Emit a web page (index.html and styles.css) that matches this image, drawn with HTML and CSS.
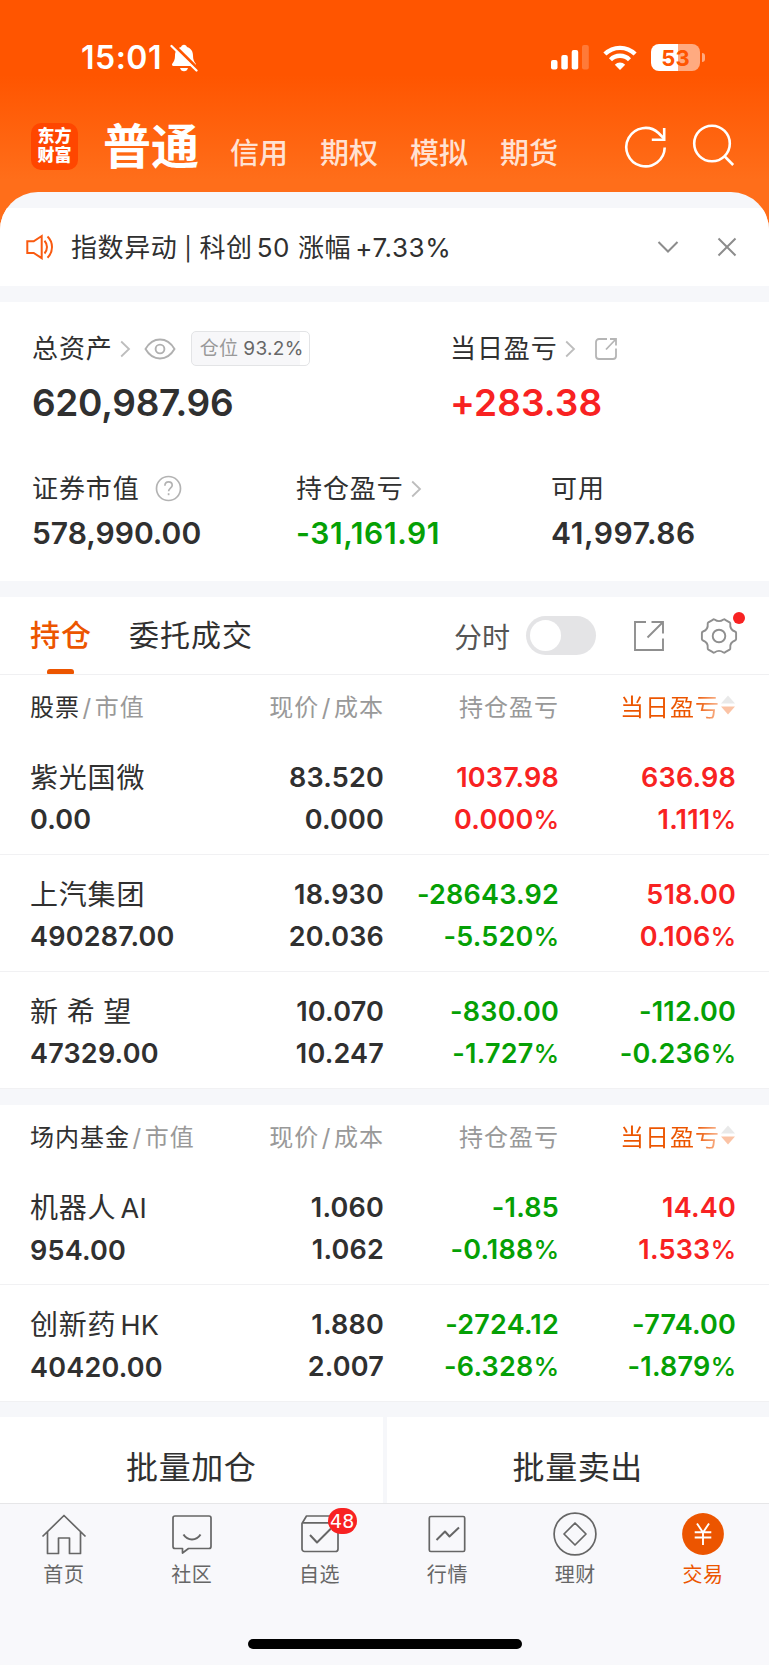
FILE: index.html
```html
<!DOCTYPE html>
<html lang="zh-CN">
<head>
<meta charset="utf-8">
<title>交易</title>
<link rel="stylesheet" href="styles.css">
</head>
<body>
<div class="page">
  <header class="top">
    <div class="status">
      <span class="time">15:01</span>
      <svg class="bell" width="28" height="28" viewBox="0 0 28 28"><path d="M14 0.8c-1.6 0-2.6 1-2.9 2.2C6.900 4.200 5 7.500 5 11.500c0 4-1 6-2.600 8-.8 1-.4 2.400 1 2.400h21.200c1.400 0 1.800-1.400 1-2.400-1.600-2-2.600-4-2.600-8 0-4-1.900-7.300-6.100-8.500C16.600 1.800 15.600.8 14 .8z" fill="#fff"/><path d="M10 24h8c-.5 2-2 3.300-4 3.300S10.500 26 10 24z" fill="#fff"/><path d="M2.500-.2 29 26" stroke="#ff5500" stroke-width="3.200"/><path d="M1.500 2 26.500 26.500" stroke="#fff" stroke-width="2.300" stroke-linecap="round"/></svg>
      <div class="indicators">
        <svg class="signal" width="39" height="25" viewBox="0 0 39 25" fill="#fff"><rect x="0" y="15" width="6.500" height="9.500" rx="2"/><rect x="10.300" y="10" width="6.500" height="14.500" rx="2"/><rect x="20.700" y="5" width="6.500" height="19.500" rx="2"/><rect x="31" y="0" width="6.800" height="24.500" rx="2" opacity=".22"/></svg>
        <svg class="wifi" width="34" height="26" viewBox="0 0 34 26" fill="none" stroke="#fff" stroke-width="4.300"><path d="M1.900 9.100a21.300 21.300 0 0 1 30.200 0"/><path d="M7.500 14.700a13.400 13.400 0 0 1 19 0"/><path d="M17 25l-5.200-5.200a7.300 7.300 0 0 1 10.400 0z" fill="#fff" stroke="none"/></svg>
        <div class="battery"><span class="battery-level">53</span></div>
      </div>
    </div>
    <nav class="accounts">
      <div class="logo"><span>东方</span><span>财富</span></div>
      <span class="account current">普通</span>
      <span class="account">信用</span>
      <span class="account">期权</span>
      <span class="account">模拟</span>
      <span class="account">期货</span>
      <svg class="refresh" width="44" height="44" viewBox="0 0 44 44" fill="none" stroke="#fff" stroke-width="2.600"><path d="M40.700 22.500A19.200 19.200 0 1 1 34.500 8L40 13.500"/><path d="M40.200 3v11.700H27.800"/></svg>
      <svg class="search" width="44" height="44" viewBox="0 0 44 44" fill="none" stroke="#fff" stroke-width="2.600"><circle cx="20" cy="19.500" r="17.800"/><path d="M32.300 32 41.200 41"/></svg>
    </nav>
  </header>

  <main class="sheet">
    <section class="notice">
      <svg class="speaker" width="28" height="26" viewBox="0 0 28 26" fill="none" stroke="#f95a10" stroke-width="2"><path d="M1.300 7.300h6.400l8-5.300v22.200l-8-5.300H1.300z"/><path d="M18.500 6.700c3.300 3.600 3.300 9.200 0 12.800M21.500 2.500c6 5.800 6 15.400 0 21.200"/></svg>
      <span class="notice-text">指数异动 <span class="bar">|</span> 科创<span class="gap"></span>50 涨幅<span class="gap"></span>+7.33%</span>
      <svg class="fold" width="22" height="14" viewBox="0 0 22 14" fill="none" stroke="#8c8c8c" stroke-width="2"><path d="M1.500 2 11 11.500 20.500 2"/></svg>
      <svg class="close" width="20" height="20" viewBox="0 0 20 20" fill="none" stroke="#8c8c8c" stroke-width="2"><path d="M1.500 1.500l17 17M18.500 1.500l-17 17"/></svg>
    </section>

    <section class="assets">
      <div class="main-figures">
        <div class="figure">
          <div class="label">总资产
            <svg class="arrow" width="11" height="18" viewBox="0 0 11 18" fill="none" stroke="#bdbdbd" stroke-width="1.800"><path d="M1.200 1.500 9 9l-7.800 7.500"/></svg>
            <svg class="eye" width="32" height="22" viewBox="0 0 32 22" fill="none" stroke="#b0b0b0" stroke-width="1.900"><path d="M1.500 11C5 5 10 1.500 16 1.500S27 5 30.500 11C27 17 22 20.500 16 20.500S5 17 1.500 11z"/><circle cx="16" cy="11" r="4.400"/></svg>
            <span class="ratio"><span class="ratio-name">仓位</span>93.2%</span>
          </div>
          <div class="big">620,987.96</div>
        </div>
        <div class="figure">
          <div class="label">当日盈亏
            <svg class="arrow" width="11" height="18" viewBox="0 0 11 18" fill="none" stroke="#bdbdbd" stroke-width="1.800"><path d="M1.200 1.500 9 9l-7.800 7.500"/></svg>
            <svg class="share-small" width="24" height="24" viewBox="0 0 24 24" fill="none" stroke="#b5b5b5" stroke-width="1.800"><path d="M13 2H5a3 3 0 0 0-3 3v14a3 3 0 0 0 3 3h14a3 3 0 0 0 3-3v-7.500M16 2h6v6.500M22 2 12 12.500"/></svg>
          </div>
          <div class="big up">+283.38</div>
        </div>
      </div>
      <div class="sub-figures">
        <div class="figure">
          <div class="label">证券市值
            <svg class="help" width="27" height="27" viewBox="0 0 27 27" fill="none" stroke="#b3b3b3" stroke-width="1.700"><circle cx="13.500" cy="13.500" r="12"/><path d="M9.900 10.800c0-2.400 1.500-3.900 3.700-3.900s3.600 1.500 3.600 3.400c0 2.700-3.600 3.100-3.600 6"/><path d="M13.600 18.200v2"/></svg>
          </div>
          <div class="mid">578,990.00</div>
        </div>
        <div class="figure">
          <div class="label">持仓盈亏
            <svg class="arrow" width="11" height="18" viewBox="0 0 11 18" fill="none" stroke="#bdbdbd" stroke-width="1.800"><path d="M1.200 1.500 9 9l-7.800 7.500"/></svg>
          </div>
          <div class="mid loose down">-31,161.91</div>
        </div>
        <div class="figure">
          <div class="label">可用</div>
          <div class="mid loose">41,997.86</div>
        </div>
      </div>
    </section>

    <section class="holdings">
      <div class="tabs">
        <span class="tab active">持仓</span>
        <span class="tab">委托成交</span>
        <span class="switch-name">分时</span>
        <span class="switch"></span>
        <svg class="share" width="32" height="32" viewBox="0 0 32 32" fill="none" stroke="#8f8f8f" stroke-width="1.900"><path d="M13 2H2v28h28V18.500M18.500 2H30v11.500M30 2 14.500 17.500"/></svg>
        <span class="settings">
          <svg width="38" height="38" viewBox="0 0 38 38" fill="none" stroke="#8f8f8f" stroke-width="1.900" stroke-linejoin="round"><path d="M12.800 2.800 Q13.500 2 14.500 2.500 Q19 5.800 23.500 2.500 Q24.500 2 25.200 2.800 L29.600 5.300 Q30.500 6 30.300 7 Q29.600 12.500 35 14.500 Q36 14.800 36.100 15.800 V22.200 Q36 23.200 35 23.500 Q29.600 25.500 30.300 31 Q30.500 32 29.600 32.700 L25.200 35.200 Q24.500 36 23.500 35.500 Q19 32.200 14.500 35.500 Q13.500 36 12.800 35.200 L8.400 32.700 Q7.500 32 7.700 31 Q8.400 25.500 3 23.500 Q2 23.200 1.900 22.200 V15.800 Q2 14.800 3 14.500 Q8.400 12.500 7.700 7 Q7.500 6 8.400 5.300 Z"/><circle cx="19" cy="19" r="6.300"/></svg>
          <i class="dot"></i>
        </span>
      </div>

      <div class="thead">
        <span><b>股票</b><span class="slash">/</span>市值</span>
        <span>现价<span class="slash">/</span>成本</span>
        <span>持仓盈亏</span>
        <span class="sorted"><span class="sorted-name">当日盈亏</span><svg class="sort" width="16" height="22" viewBox="0 0 16 22"><path d="M1 9.500 8 1.500 15 9.500z" fill="#e9e9e9"/><path d="M1 12.500 8 20.500 15 12.500z" fill="#fbc3a5"/></svg></span>
      </div>
      <div class="row">
        <div><span class="name">紫光国微</span><span>0.00</span></div>
        <div><span>83.520</span><span>0.000</span></div>
        <div class="up"><span>1037.98</span><span>0.000<i>%</i></span></div>
        <div class="up"><span>636.98</span><span>1.111<i>%</i></span></div>
      </div>
      <div class="row">
        <div><span class="name">上汽集团</span><span>490287.00</span></div>
        <div><span>18.930</span><span>20.036</span></div>
        <div class="down"><span>-28643.92</span><span>-5.520<i>%</i></span></div>
        <div class="up"><span>518.00</span><span>0.106<i>%</i></span></div>
      </div>
      <div class="row">
        <div><span class="name spaced">新 希 望</span><span>47329.00</span></div>
        <div><span>10.070</span><span>10.247</span></div>
        <div class="down"><span>-830.00</span><span>-1.727<i>%</i></span></div>
        <div class="down"><span>-112.00</span><span>-0.236<i>%</i></span></div>
      </div>
    </section>

    <section class="holdings">
      <div class="thead">
        <span><b>场内基金</b><span class="slash">/</span>市值</span>
        <span>现价<span class="slash">/</span>成本</span>
        <span>持仓盈亏</span>
        <span class="sorted"><span class="sorted-name">当日盈亏</span><svg class="sort" width="16" height="22" viewBox="0 0 16 22"><path d="M1 9.500 8 1.500 15 9.500z" fill="#e9e9e9"/><path d="M1 12.500 8 20.500 15 12.500z" fill="#fbc3a5"/></svg></span>
      </div>
      <div class="row">
        <div><span class="name">机器人<span class="latin">AI</span></span><span>954.00</span></div>
        <div><span>1.060</span><span>1.062</span></div>
        <div class="down"><span>-1.85</span><span>-0.188<i>%</i></span></div>
        <div class="up"><span>14.40</span><span>1.533<i>%</i></span></div>
      </div>
      <div class="row">
        <div><span class="name">创新药<span class="latin">HK</span></span><span>40420.00</span></div>
        <div><span>1.880</span><span>2.007</span></div>
        <div class="down"><span>-2724.12</span><span>-6.328<i>%</i></span></div>
        <div class="down"><span>-774.00</span><span>-1.879<i>%</i></span></div>
      </div>
    </section>

    <section class="batch">
      <span class="batch-button">批量加仓</span>
      <span class="batch-button">批量卖出</span>
    </section>
  </main>

  <footer class="bottom">
    <nav class="menu">
      <a class="item"><svg width="46" height="44" viewBox="0 0 46 44" fill="none" stroke="#666" stroke-width="1.700" stroke-linejoin="round"><path d="M1.500 24.500 23 3.500l21.500 21M6.500 20v21.500h11V26h11v15.500h11V20"/></svg>首页</a>
      <a class="item"><svg width="46" height="44" viewBox="0 0 46 44" fill="none" stroke="#666" stroke-width="1.700" stroke-linejoin="round"><path d="M6 4h34a2 2 0 0 1 2 2v28.500a2 2 0 0 1-2 2H19.500L13.500 41v-4.500H6a2 2 0 0 1-2-2V6a2 2 0 0 1 2-2z"/><path d="M14.500 22.500c4 6.500 13 6.500 17 0" stroke-width="2"/></svg>社区</a>
      <a class="item"><svg width="46" height="44" viewBox="0 0 46 44" fill="none" stroke="#666" stroke-width="1.700" stroke-linejoin="round"><path d="M5 11.500 9.500 4H36l5 7.500V37a2.500 2.500 0 0 1-2.500 2.500h-31A2.500 2.500 0 0 1 5 37zM5 10.800h36"/><path d="M13 23l7 7.500 14-14" stroke-width="2"/></svg>自选<span class="badge">48</span></a>
      <a class="item"><svg width="46" height="44" viewBox="0 0 46 44" fill="none" stroke="#666" stroke-width="1.700" stroke-linejoin="round"><rect x="5.300" y="4.500" width="35.400" height="35" rx="1.500"/><path d="M12.500 28 21 19.500l4.500 5L35 15.500" stroke-width="2"/></svg>行情</a>
      <a class="item"><svg width="46" height="44" viewBox="0 0 46 44" fill="none" stroke="#666" stroke-width="1.700" stroke-linejoin="round"><circle cx="23" cy="22" r="20.900"/><path d="M23 11 34 22 23 33 12 22z"/></svg>理财</a>
      <a class="item selected"><svg width="46" height="44" viewBox="0 0 46 44" fill="none" stroke="#fff" stroke-width="1.900"><circle cx="23" cy="22" r="20.900" fill="#ec5500" stroke="none"/><path d="M17 11.500l6 9 6-9M14.700 20.300h16.600M14.700 25.500h16.600M23 20v13"/></svg>交易</a>
    </nav>
    <div class="home-bar"></div>
  </footer>
</div>
</body>
</html>
```
FILE: styles.css
```css
* { box-sizing: border-box; }

body {
  margin: 0;
  color: #303030;
  background: #f7f8fa;
  font-family: Inter, "Noto Sans CJK SC", sans-serif;
}

svg { display: block; flex: none; }

.page {
  display: flex;
  flex-direction: column;
  width: 769px;
  height: 1665px;
  overflow: hidden;
}

/* Header */
.top {
  height: 240px;
  margin-bottom: -48px;
  background: linear-gradient(#ff5500 0, #ff5500 75px, #ff6e1a 180px);
  color: #fff;
}

.status {
  display: flex;
  align-items: center;
  height: 115px;
  padding: 0 64px 0 81px;
}

.time {
  width: 89px;
  font-size: 32px;
  font-weight: 600;
  letter-spacing: 0.5px;
}

.indicators {
  display: flex;
  align-items: center;
  margin-left: auto;
}

.wifi { margin-left: 13px; }

.battery {
  position: relative;
  width: 49px;
  height: 27px;
  margin: 0 5px 0 14px;
  border-radius: 8px;
  background: linear-gradient(90deg, #fff 27px, rgba(255, 255, 255, .5) 27px);
}

.battery::after {
  content: "";
  position: absolute;
  top: 9px;
  right: -4.500px;
  width: 3px;
  height: 9px;
  border-radius: 0 4px 4px 0;
  background: rgba(255, 255, 255, .5);
}

.battery-level {
  display: block;
  color: #ff5500;
  font-size: 22px;
  font-weight: 700;
  line-height: 28px;
  text-align: center;
}

.accounts {
  display: flex;
  align-items: center;
  height: 62px;
  padding: 0 31px;
}

.logo {
  display: flex;
  flex-direction: column;
  align-items: center;
  width: 47px;
  height: 47px;
  padding-top: 4px;
  border-radius: 10px;
  background: #ff4600;
  font-size: 17px;
  font-weight: 900;
  line-height: 19.500px;
}

.account {
  width: 90px;
  margin-top: 16px;
  color: rgba(255, 255, 255, .82);
  font-size: 29px;
  font-weight: 500;
  line-height: 40px;
}

.account.current {
  width: 127px;
  margin: 1px 0 0 25px;
  color: #fff;
  font-size: 48px;
  font-weight: 700;
  line-height: 60px;
}

.refresh { margin: 1px 0 0 34px; }
.search { margin-left: auto; margin-right: 2px; }

/* Sheet */
.sheet {
  display: flex;
  flex-direction: column;
  gap: 16px;
  height: 1311px;
  padding-top: 16px;
  border-radius: 38px 38px 0 0;
  background: #f6f7fa;
  overflow: hidden;
}

.notice {
  display: flex;
  align-items: center;
  height: 78px;
  padding: 0 32px 0 26px;
  background: #fff;
}

.notice-text {
  flex: 1;
  margin: -2px 0 0 17px;
  font-size: 26px;
  letter-spacing: 0.6px;
}

.bar { margin: 0 -1px; font-size: 23px; }

.gap { display: inline-block; width: 4px; }

.close { margin-left: 38px; }

.assets {
  height: 280px;
  padding: 26px 32px 0;
  background: #fff;
}

.main-figures,
.sub-figures { display: grid; }

.main-figures { grid-template-columns: 418px 1fr; }

.sub-figures {
  grid-template-columns: 264px 255px 1fr;
  margin-top: 34px;
}

.label {
  display: flex;
  align-items: center;
  height: 42px;
  font-size: 26px;
  letter-spacing: 0.9px;
  line-height: 40px;
}

.arrow { margin-left: 7px; }
.eye { margin-left: 13px; }
.share-small { margin-left: 18px; }
.help { margin-left: 15px; }

.ratio {
  display: flex;
  align-items: center;
  height: 35px;
  margin-left: 15px;
  padding: 0 5px 0 8px;
  border: 1px solid #e3e4e6;
  border-radius: 5px;
  background: linear-gradient(90deg, #f7f7f9 108px, #fff 108px);
  color: #666;
  font-size: 19px;
  letter-spacing: 0.3px;
}

.ratio-name { margin-right: 5px; color: #999; }

.big {
  height: 64px;
  font-size: 37px;
  font-weight: 600;
  letter-spacing: -0.3px;
  line-height: 66px;
}

.big.up { letter-spacing: 0.1px; }

.mid {
  font-size: 30px;
  font-weight: 600;
  line-height: 46px;
}

.mid.loose { letter-spacing: 0.6px; }

.up { color: #f82222; }
.down { color: #05a005; }

/* Holdings */
.holdings { background: #fff; }

.tabs {
  display: flex;
  align-items: center;
  height: 78px;
  padding: 0 31px 0 30px;
  border-bottom: 1px solid #f0f0f2;
}

.tab {
  position: relative;
  margin-right: 38px;
  font-size: 30px;
  letter-spacing: 1px;
  line-height: 77px;
}

.tab.active { color: #ec5500; font-weight: 500; margin-right: 37px; }

.tab.active::after {
  content: "";
  position: absolute;
  bottom: 0;
  left: 17px;
  width: 27px;
  height: 5px;
  border-radius: 3px 3px 1px 1px;
  background: #ec5500;
}

.switch-name {
  margin-left: auto;
  color: #555;
  font-size: 28px;
}

.switch {
  width: 70px;
  height: 39px;
  margin-left: 16px;
  padding: 4px;
  border-radius: 20px;
  background: #e4e4e6;
}

.switch::before {
  content: "";
  display: block;
  width: 31px;
  height: 31px;
  border-radius: 50%;
  background: #fff;
}

.share { margin-left: 37px; }

.settings { position: relative; margin-left: 35px; }

.dot {
  position: absolute;
  top: -5px;
  right: -7px;
  width: 12px;
  height: 12px;
  border-radius: 50%;
  background: #f82222;
}

.thead,
.row {
  display: grid;
  grid-template-columns: 230px 124px 175px 177px;
  padding: 0 33px 0 30px;
  text-align: right;
}

.thead {
  align-items: center;
  height: 63px;
  padding-bottom: 3px;
  color: #999;
  font-size: 24px;
  letter-spacing: 1px;
}

.thead > :first-child,
.row > :first-child { text-align: left; }

.thead b { color: #303030; font-weight: 400; }

.slash { margin: 0 2.500px; }

.sorted {
  display: flex;
  align-items: center;
  justify-content: flex-end;
}

.sorted-name {
  color: transparent;
  background: linear-gradient(90deg, #ec5500 76px, #fcd0b8 104px);
  -webkit-background-clip: text;
  background-clip: text;
}

.row {
  height: 117px;
  padding-top: 19px;
  border-bottom: 1px solid #f1f1f3;
  font-size: 27px;
  font-weight: 600;
  letter-spacing: 0.2px;
  line-height: 42px;
}

.row > div > span { display: block; }

.row i {
  font-size: 26px;
  font-style: normal;
  font-weight: 500;
  letter-spacing: -0.3px;
}

.row > div > .name {
  font-size: 28px;
  font-weight: 400;
  letter-spacing: 0.8px;
}

.row > div > .name.spaced { letter-spacing: 0.4px; }

.latin { margin-left: 4px; font-size: 27px; letter-spacing: 0.4px; }

/* Batch actions */
.batch {
  display: flex;
  gap: 4px;
  height: 86px;
  margin-top: -1px;
}

.batch-button {
  flex: 1;
  padding-top: 15px;
  background: #fff;
  font-size: 32px;
  letter-spacing: 0.6px;
  line-height: 72px;
  text-align: center;
}

/* Bottom bar */
.bottom {
  display: flex;
  flex-direction: column;
  align-items: center;
  height: 162px;
  border-top: 1px solid #e6e6e8;
  background: #f8f8fb;
}

.menu {
  display: flex;
  width: 100%;
  height: 135px;
  padding-right: 2px;
}

.item {
  position: relative;
  display: flex;
  flex: 1;
  flex-direction: column;
  align-items: center;
  padding-top: 8px;
  color: #666;
  font-size: 20px;
  letter-spacing: 0.6px;
  line-height: 38px;
}

.selected { color: #ec5500; }

.badge {
  position: absolute;
  top: 4px;
  left: 72px;
  width: 29px;
  height: 26px;
  border-radius: 13px;
  background: #f82222;
  color: #fff;
  font-family: "DejaVu Sans", sans-serif;
  font-size: 19px;
  letter-spacing: 0;
  line-height: 27px;
  text-align: center;
}

.home-bar {
  width: 274px;
  height: 10px;
  border-radius: 5px;
  background: #000;
}
```
